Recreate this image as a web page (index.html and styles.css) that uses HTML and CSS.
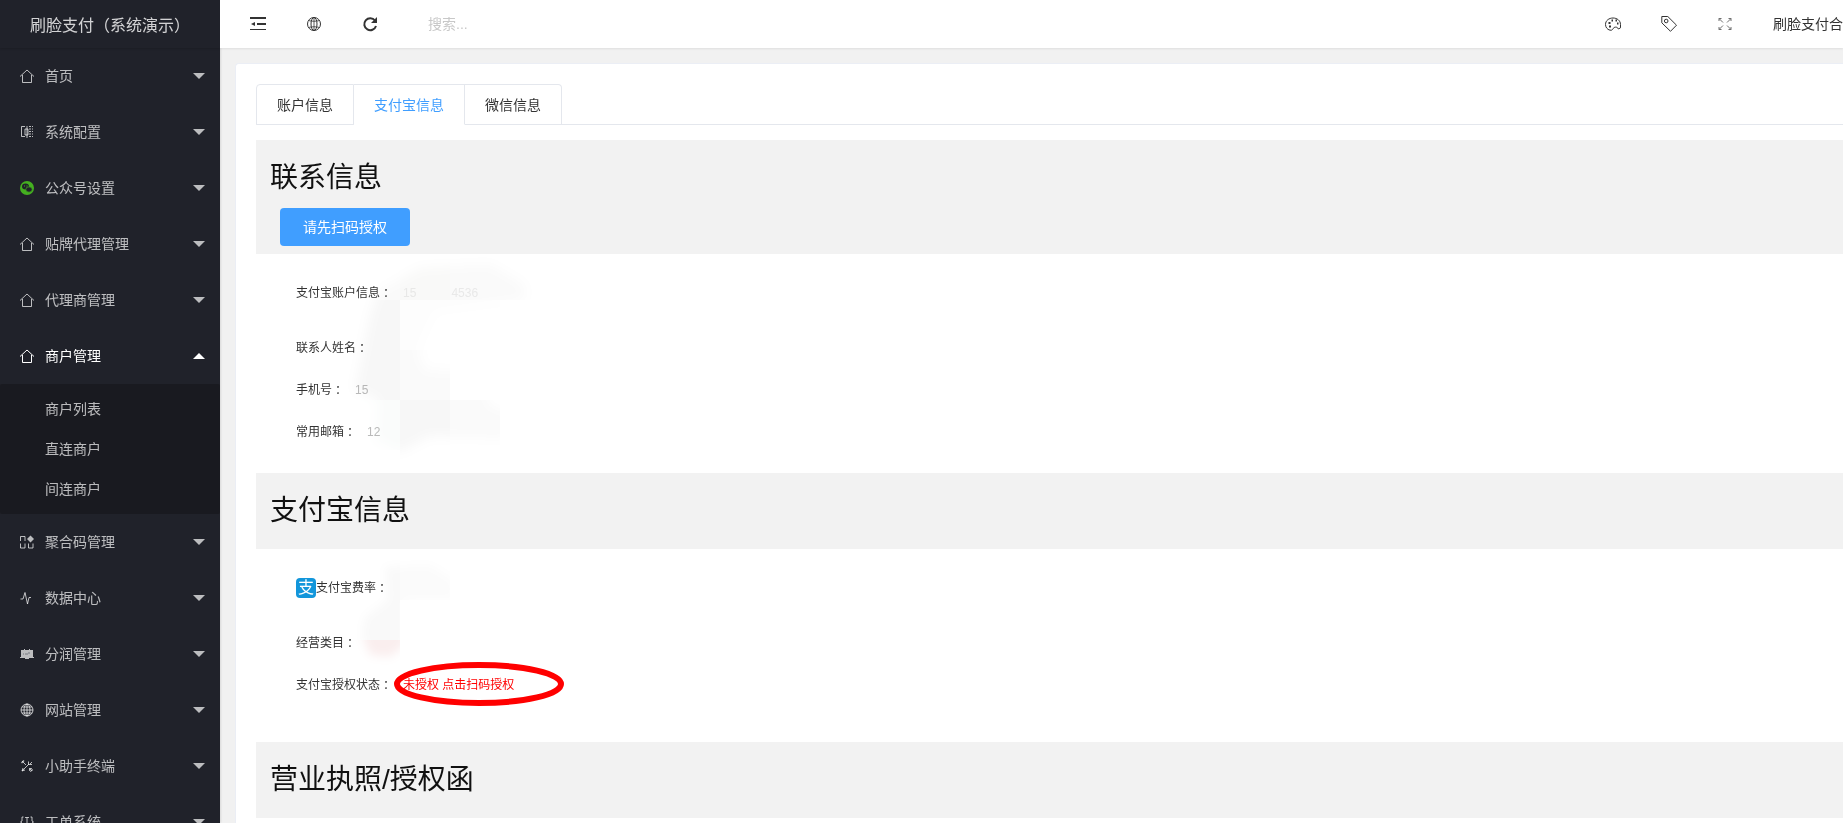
FILE: index.html
```html
<!DOCTYPE html>
<html lang="zh-CN">
<head>
  <meta charset="UTF-8">
  <meta name="viewport" content="width=device-width, initial-scale=1.0">
  <title>刷脸支付（系统演示）</title>
  <link rel="stylesheet" href="styles.css">
</head>
<body>
<div class="layout">
  <!-- 侧边菜单 -->
  <aside class="side">
    <div class="logo">刷脸支付<span class="punct" lang="zh-TW">（</span>系统演示<span class="punct" lang="zh-TW">）</span></div>
    <nav>
      <ul class="menu">
        <li><a href="#"><svg class="icon" viewBox="0 0 14 14"><path d="M0 7.500 7 1l7 6.500M2.500 6v7.500h9V6"/></svg>首页<i class="arrow"></i></a></li>
        <li><a href="#"><svg class="icon" viewBox="0 0 14 14"><path d="M5 1.500H1.500v10H5M5 4h3v6H5zM7 1v12"/><path d="M9 1.500h4M9 4h4M9 6.500h4M9 9h4M9 11.500h4" stroke-dasharray="2 1"/></svg>系统配置<i class="arrow"></i></a></li>
        <li><a href="#"><svg class="icon" viewBox="0 0 14 14"><circle cx="7" cy="7" r="7" fill="#44b020" stroke="none"/><ellipse cx="5.500" cy="5.500" rx="3.500" ry="3" fill="#20222a" stroke="none"/><ellipse cx="9" cy="8.500" rx="3.200" ry="2.700" fill="#20222a" stroke="#44b020" stroke-width=".7"/><path d="M4.500 4.500v1M7 4.500v1" stroke="#44b020"/></svg>公众号设置<i class="arrow"></i></a></li>
        <li><a href="#"><svg class="icon" viewBox="0 0 14 14"><path d="M0 7.500 7 1l7 6.500M2.500 6v7.500h9V6"/></svg>贴牌代理管理<i class="arrow"></i></a></li>
        <li><a href="#"><svg class="icon" viewBox="0 0 14 14"><path d="M0 7.500 7 1l7 6.500M2.500 6v7.500h9V6"/></svg>代理商管理<i class="arrow"></i></a></li>
        <li class="open">
          <a href="#"><svg class="icon" viewBox="0 0 14 14"><path d="M0 7.500 7 1l7 6.500M2.500 6v7.500h9V6"/></svg>商户管理<i class="arrow up"></i></a>
          <ul class="submenu">
            <li><a href="#">商户列表</a></li>
            <li><a href="#">直连商户</a></li>
            <li><a href="#">间连商户</a></li>
          </ul>
        </li>
        <li><a href="#"><svg class="icon" viewBox="0 0 14 14"><path d="M.5 6V1.500H5V6M.5 8.500v4.500H5V8.500M8.500 8.500v4.500H13V8.500"/><path d="m10.500.5 3.500 3.500-3.500 3.500L7 4z" fill="currentColor" stroke="none"/></svg>聚合码管理<i class="arrow"></i></a></li>
        <li><a href="#"><svg class="icon" viewBox="0 0 14 14"><path d="M.5 8H3l2-6.500L7.500 13 9 6.500h2"/></svg>数据中心<i class="arrow"></i></a></li>
        <li><a href="#"><svg class="icon" viewBox="0 0 14 14"><path d="M1 3h3V2h1v1h4V2h1v1h3v7h1v1H9v1H5v-1H0v-1h1z" fill="currentColor" stroke="none"/><path d="M3 7h1M5 7h3M8 6h2" stroke="#777980"/></svg>分润管理<i class="arrow"></i></a></li>
        <li><a href="#"><svg class="icon" viewBox="0 0 14 14"><circle cx="7" cy="7" r="6"/><ellipse cx="7" cy="7" rx="3" ry="6"/><path d="M1 7h12M7 1v12M2 4h10M2 10h10"/></svg>网站管理<i class="arrow"></i></a></li>
        <li><a href="#"><svg class="icon" viewBox="0 0 14 14"><path d="m2 2 4 4m3 3 3 3M2 12l7-7M8.500 2.500v3h3.500M12 3l-2 2M3 9l-1 3 3-1M9 11l2-2 1.500 2-1.500 1.500z"/><path d="M1.500 4 4 1.500" stroke-width="1.500"/></svg>小助手终端<i class="arrow"></i></a></li>
        <li><a href="#"><svg class="icon" viewBox="0 0 14 14"><path d="M3.500 2H2v4L.5 7 2 8v4h1.500M10.500 2H12v4l1.500 1L12 8v4h-1.500M5 2.500h4M7 2.500V11"/></svg>工单系统<i class="arrow"></i></a></li>
      </ul>
    </nav>
  </aside>

  <div class="main">
    <!-- 顶部工具栏 -->
    <header class="header">
      <button type="button" class="tool" aria-label="收起菜单"><svg width="16" height="16" viewBox="0 0 16 16"><path d="M0 2h16M7 8h9" stroke-width="2"/><path d="M0 13.500h16"/><path d="M5 6v4L1 8z" fill="currentColor" stroke="none"/></svg></button>
      <button type="button" class="tool" aria-label="网站"><svg width="16" height="16" viewBox="0 0 16 16"><circle cx="8" cy="8" r="6.500"/><ellipse cx="8" cy="8" rx="3" ry="6.500"/><path d="M2.500 4.500c3 1 8 1 11 0M2.500 11.500c3-1 8-1 11 0M8 1.500v13" stroke-width=".8"/></svg></button>
      <button type="button" class="tool" aria-label="刷新"><svg width="16" height="16" viewBox="0 0 16 16"><path d="M13 4.500A6 6 0 1 0 14 10" stroke-width="2"/><path d="M15 1v6H9z" fill="currentColor" stroke="none"/></svg></button>
      <input class="search" type="text" placeholder="搜索..." aria-label="搜索">
      <div class="tools-right">
        <button type="button" class="tool" aria-label="主题"><svg width="16" height="16" viewBox="0 0 16 16"><path d="M5 14.200C2 13.500.5 11 .5 8.500.5 4.500 4 2 8 2s7.500 2.500 7.500 6.500v3.300l-2 1.200c-1-1.800-2.500-2.300-4.300-1.500C7.500 12.500 8 14.700 5 14.200z"/><path d="M4 10.500h2M3.500 7h2M6.500 4.500h1.500M10.500 4.500H12M12 7.500h1.500" stroke-width="2"/></svg></button>
        <button type="button" class="tool" aria-label="便签"><svg width="16" height="16" viewBox="0 0 16 16"><path d="M.8.500h6L15.500 9.200 9.500 15.300.8 6.800z"/><circle cx="5.200" cy="5" r="1.800"/></svg></button>
        <button type="button" class="tool" aria-label="全屏"><svg class="pale" width="16" height="16" viewBox="0 0 16 16"><path d="m2 2.500 4 4M14 2.500l-4 4M2 13.500l4-4M14 13.500l-4-4M2 5V2.500h2.500M11.500 2.500H14V5M2 11v2.500h2.500M14 11v2.500h-2.500"/></svg></button>
        <a class="user" href="#">刷脸支付合</a>
      </div>
    </header>

    <main class="card">
      <div class="tabs" role="tablist">
        <button type="button" class="tab" role="tab">账户信息</button>
        <button type="button" class="tab active" role="tab" aria-selected="true">支付宝信息</button>
        <button type="button" class="tab" role="tab">微信信息</button>
      </div>

      <!-- 联系信息 -->
      <section>
        <div class="section-head">
          <h2>联系信息</h2>
          <button type="button" class="btn">请先扫码授权</button>
        </div>
        <dl class="info contact">
          <div class="row first"><dt>支付宝账户信息<span class="punct" lang="zh-TW">：</span></dt><dd class="hidden-value">15<span class="tail">4536</span></dd></div>
          <div class="row"><dt>联系人姓名<span class="punct" lang="zh-TW">：</span></dt><dd></dd></div>
          <div class="row"><dt>手机号<span class="punct" lang="zh-TW">：</span></dt><dd class="masked">15</dd></div>
          <div class="row"><dt>常用邮箱<span class="punct" lang="zh-TW">：</span></dt><dd class="masked">12</dd></div>
          <svg class="smudge" width="200" height="210" viewBox="0 0 200 210">
            <defs>
              <filter id="soft" x="-20%" y="-20%" width="140%" height="140%"><feGaussianBlur stdDeviation="6"/></filter>
              <mask id="brush"><path filter="url(#soft)" fill="#fff" d="M38 42 80 18 150 14 185 35V50L95 62 78 100 85 120 140 122 150 155 180 165 165 188 90 186 60 202 35 190 38 150 15 140 30 65z"/></mask>
            </defs>
            <g mask="url(#brush)">
              <path fill="#fafafa" d="M0 0h60v50H0zM110 0h50v50h-50zM160 0h40v50h-40z"/>
              <path fill="#f9f9f8" d="M60 0h50v50H60z"/>
              <path fill="#f7f7f7" d="M0 50h60v100H0zM60 150h50v60H60z"/>
              <path fill="#fdfdfd" d="M60 50h100v50H60z"/>
              <path fill="#fafafa" d="M60 100h50v50H60zM110 150h50v50h-50z"/>
              <path fill="#fafcfb" d="M0 150h60v50H0z"/>
            </g>
          </svg>
        </dl>
      </section>

      <!-- 支付宝信息 -->
      <section>
        <div class="section-head">
          <h2>支付宝信息</h2>
        </div>
        <dl class="info alipay">
          <div class="row first"><dt><span class="pay-icon">支</span>支付宝费率<span class="punct" lang="zh-TW">：</span></dt><dd></dd></div>
          <div class="row"><dt>经营类目<span class="punct" lang="zh-TW">：</span></dt><dd></dd></div>
          <div class="row"><dt>支付宝授权状态<span class="punct" lang="zh-TW">：</span></dt><dd class="status"><a href="#">未授权 点击扫码授权</a>
            <svg class="ring" width="172" height="46" viewBox="0 0 172 46"><ellipse cx="86" cy="23" rx="82" ry="19"/></svg></dd></div>
          <svg class="smudge" width="120" height="120" viewBox="0 0 120 120">
            <defs>
              <filter id="soft2" x="-20%" y="-20%" width="140%" height="140%"><feGaussianBlur stdDeviation="5"/></filter>
              <mask id="brush2"><path filter="url(#soft2)" fill="#fff" d="M45 22 90 20 115 36V55H65V100L50 112 30 110 22 90 25 72 48 55z"/></mask>
            </defs>
            <g mask="url(#brush2)">
              <path fill="#f9f9f9" d="M0 0h60v95H0z"/>
              <path fill="#fbfbfb" d="M60 0h50v55H60z"/>
              <path fill="#faeeee" d="M0 95h60v25H0z"/>
            </g>
          </svg>
        </dl>
      </section>

      <!-- 营业执照 -->
      <section>
        <div class="section-head">
          <h2>营业执照/授权函</h2>
        </div>
      </section>
    </main>
  </div>
</div>
</body>
</html>
```
FILE: styles.css
```css
* { box-sizing: border-box; }
body {
  margin: 0;
  overflow: hidden;
  font: 14px/24px "Liberation Sans", "Noto Sans CJK SC", sans-serif;
  color: #333;
  background-color: #f1f1f1;
}
ul, dl, dd, h2 { margin: 0; padding: 0; }
ul { list-style: none; }
a { color: inherit; text-decoration: none; }
button { font: inherit; color: inherit; cursor: pointer; }
svg { fill: none; stroke: currentColor; display: block; }
/* 标点居中 */
.punct { font-family: "Noto Sans CJK TC", sans-serif; }

.layout { display: flex; height: 100vh; }

/* 侧边菜单 */
.side {
  flex: 0 0 220px;
  overflow: hidden;
  color: rgba(255, 255, 255, .7);
  background-color: #20222a;
  box-shadow: 1px 0 2px rgba(0, 0, 0, .1);
}
.logo {
  height: 48px;
  line-height: 48px;
  font-size: 16px;
  text-align: center;
  color: rgba(255, 255, 255, .8);
  box-shadow: 0 1px 2px rgba(0, 0, 0, .15);
}
.menu a {
  display: flex;
  align-items: center;
  height: 56px;
  padding: 0 15px 0 20px;
}
.icon { width: 14px; height: 14px; margin-right: 11px; overflow: visible; }
.arrow {
  margin-left: auto;
  border: 6px solid transparent;
  border-top-color: currentColor;
  border-bottom-width: 0;
}
.arrow.up {
  border-width: 0 6px 6px;
  border-bottom-color: currentColor;
}
.menu .open > a { color: #fff; }
.submenu {
  padding: 5px 0;
  border-radius: 2px;
  background-color: #191a20;
}
.menu .submenu a { height: 40px; padding-left: 45px; }

/* 顶部 */
.main { flex: 1; min-width: 0; overflow: hidden; }
.header {
  display: flex;
  align-items: center;
  height: 48px;
  padding-left: 10px;
  background-color: #fff;
  box-shadow: 0 1px 2px rgba(0, 0, 0, .08);
}
.tool {
  display: flex;
  align-items: center;
  justify-content: center;
  width: 56px;
  height: 48px;
  padding: 0;
  border: 0;
  background: none;
}
.pale { opacity: .7; }
.search {
  width: 200px;
  height: 36px;
  margin-left: 30px;
  padding: 0;
  border: 0;
  outline: 0;
  font: inherit;
  background: none;
}
.search::placeholder { color: #c8c8c8; }
.tools-right { display: flex; align-items: center; margin-left: auto; }
.user { margin-left: 20px; white-space: nowrap; }

/* 内容 */
.card {
  min-height: 100vh;
  margin: 15px 0 0 15px;
  padding: 20px 0 0 20px;
  border: 1px solid #ebeef5;
  border-right: 0;
  border-radius: 4px 0 0 0;
  background-color: #fff;
}
.tabs {
  display: flex;
  height: 41px;
  margin-bottom: 15px;
  border-bottom: 1px solid #e4e7ed;
}
.tab {
  height: 41px;
  padding: 0 20px;
  border: 1px solid #e4e7ed;
  border-left: 0;
  background-color: #fff;
}
.tab:first-child { border-left: 1px solid #e4e7ed; border-top-left-radius: 4px; }
.tab:last-child { border-top-right-radius: 4px; }
.tab.active { color: #409eff; border-bottom-color: #fff; }

.section-head { padding: 20px 14px 8px; background-color: #f2f2f2; }
h2 {
  padding-bottom: 12px;
  font-size: 28px;
  line-height: 36px;
  font-weight: normal;
  color: #111;
}
.btn {
  display: block;
  height: 38px;
  margin-left: 10px;
  padding: 0 23px;
  border: 0;
  border-radius: 4px;
  color: #fff;
  background-color: #409eff;
}

.info {
  position: relative;
  padding: 18px 40px 20px;
  font-size: 12px;
}
.alipay { padding-bottom: 36px; }
.row { display: flex; align-items: center; height: 42px; }
.row.first { margin-bottom: 13px; }
dt { display: flex; align-items: center; }
dd { margin-left: 11px; }
.masked { color: #bbb; }
.hidden-value { color: #eee; }
.tail { margin-left: 35px; }
.pay-icon {
  width: 20px;
  height: 20px;
  border-radius: 4px;
  font-size: 16px;
  line-height: 20px;
  text-align: center;
  color: #fff;
  background-color: #1296db;
}
.status { position: relative; color: #f00; }

/* 标记圈与涂抹 */
.ring {
  position: absolute;
  top: -12px;
  left: -10px;
  stroke-width: 6px;
  pointer-events: none;
}
.smudge {
  position: absolute;
  top: -4px;
  left: 84px;
  stroke: none;
  mix-blend-mode: multiply;
  pointer-events: none;
}
```
